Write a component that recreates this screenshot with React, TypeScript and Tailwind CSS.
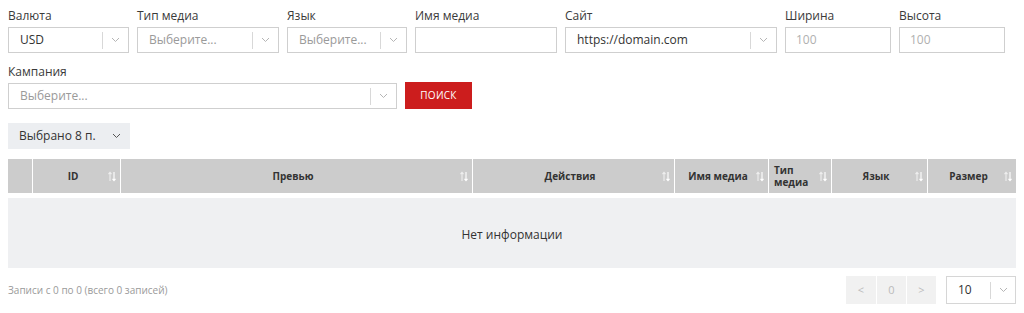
import React from 'react';

const FONT = { fontFamily: '"Open Sans", "Noto Sans", sans-serif' };

function Chevron({ className = 'text-[#b5b5b5]' }: { className?: string }) {
  return (
    <svg width="9" height="6" viewBox="0 0 9 6" className={className}>
      <path d="M1 1l3.5 3.5L8 1" fill="none" stroke="currentColor" strokeWidth="1" />
    </svg>
  );
}

function SortIcon() {
  return (
    <svg width="8" height="11" viewBox="0 0 8 11" className="shrink-0">
      <path d="M2 10V1.5M0.5 3.2L2 1.3 3.5 3.2" fill="none" stroke="#eeeeee" strokeWidth="1.1" />
      <path d="M6 1v8.5M4.5 7.8L6 9.7 7.5 7.8" fill="none" stroke="#ffffff" strokeWidth="1.1" />
    </svg>
  );
}

function Select({ value, placeholder, width }: { value?: string; placeholder?: string; width: string }) {
  return (
    <div className={`${width} h-[26px] flex items-center border border-[#cfcfcf] bg-white`}>
      <span className={`flex-1 pl-[11px] text-[12px] truncate ${value ? 'text-[#333]' : 'text-[#9a9a9a]'}`}>
        {value ?? placeholder}
      </span>
      <span className="h-[17px] w-px bg-[#d8d8d8]" />
      <span className="w-[25px] flex justify-center">
        <Chevron />
      </span>
    </div>
  );
}

function Field({ label, children }: { label: string; children: React.ReactNode }) {
  return (
    <div className="flex flex-col">
      <label className="text-[12px] leading-[16px] text-[#3a3a3a] mb-[3px]">{label}</label>
      {children}
    </div>
  );
}

function Input({ width, placeholder }: { width: string; placeholder?: string }) {
  return (
    <div className={`${width} h-[26px] flex items-center border border-[#cfcfcf] bg-white pl-[10px] text-[12px] text-[#b0b0b0]`}>
      {placeholder}
    </div>
  );
}

const COLUMNS: { label: string; width: string; align?: 'left' }[] = [
  { label: 'ID', width: 'w-[87px]' },
  { label: 'Превью', width: 'w-[351px]' },
  { label: 'Действия', width: 'w-[201px]' },
  { label: 'Имя медиа', width: 'w-[93px]' },
  { label: 'Тип медиа', width: 'w-[62px]', align: 'left' },
  { label: 'Язык', width: 'w-[95px]' },
  { label: 'Размер', width: 'flex-1' },
];

export default function App() {
  return (
    <div className="w-[1024px] h-[313px] bg-white px-2 pt-2 overflow-hidden" style={FONT}>
      <div className="flex gap-[8px]">
        <Field label="Валюта">
          <Select value="USD" width="w-[121px]" />
        </Field>
        <Field label="Тип медиа">
          <Select placeholder="Выберите..." width="w-[142px]" />
        </Field>
        <Field label="Язык">
          <Select placeholder="Выберите..." width="w-[120px]" />
        </Field>
        <Field label="Имя медиа">
          <Input width="w-[142px]" />
        </Field>
        <Field label="Сайт">
          <Select value="https://domain.com" width="w-[212px]" />
        </Field>
        <Field label="Ширина">
          <Input width="w-[106px]" placeholder="100" />
        </Field>
        <Field label="Высота">
          <Input width="w-[106px]" placeholder="100" />
        </Field>
      </div>

      <div className="flex items-end gap-[8px] mt-[11px]">
        <Field label="Кампания">
          <Select placeholder="Выберите..." width="w-[389px]" />
        </Field>
        <button className="w-[67px] h-[27px] bg-[#cc1d1d] text-white text-[10px] font-medium uppercase tracking-wide">
          Поиск
        </button>
      </div>

      <div className="mt-[14px] w-[122px] h-[26px] bg-[#eceef1] flex items-center pl-[11px] pr-[9px] justify-between text-[12px] text-[#333]">
        <span>Выбрано 8 п.</span>
        <Chevron className="text-[#555]" />
      </div>

      <div className="mt-[10px] w-[1008px]">
        <div className="flex h-[34px] gap-px bg-white">
          <div className="w-[24px] bg-[#cccccc]" />
          {COLUMNS.map((c) => (
            <div key={c.label} className={`${c.width} bg-[#cccccc] flex items-center pl-[5px] pr-[4px]`}>
              <span
                className={`flex-1 text-[10px] font-bold text-[#333] leading-[12px] ${c.align === 'left' ? 'text-left' : 'text-center'}`}
              >
                {c.align === 'left' ? (
                  <>
                    Тип
                    <br />
                    медиа
                  </>
                ) : (
                  c.label
                )}
              </span>
              <SortIcon />
            </div>
          ))}
        </div>
        <div className="mt-[5px] h-[70px] bg-[#eff0f2] flex items-center justify-center pt-[3px] text-[12px] text-[#333]">
          Нет информации
        </div>
      </div>

      <div className="mt-[8px] w-[1008px] flex items-center justify-between">
        <span className="text-[10px] text-[#9a9a9a]">Записи с 0 по 0 (всего 0 записей)</span>
        <div className="flex items-center">
          <div className="flex gap-px">
            <div className="w-[30px] h-[28px] bg-[#f1f1f1] flex items-center justify-center text-[11px] text-[#bbb]">&lt;</div>
            <div className="w-[29px] h-[28px] bg-[#f1f1f1] flex items-center justify-center text-[11px] text-[#bbb]">0</div>
            <div className="w-[29px] h-[28px] bg-[#f1f1f1] flex items-center justify-center text-[11px] text-[#bbb]">&gt;</div>
          </div>
          <div className="ml-[10px] w-[70px] h-[28px] border border-[#d6d6d6] flex items-center">
            <span className="flex-1 pl-[11px] text-[12px] text-[#333]">10</span>
            <span className="h-[17px] w-px bg-[#d8d8d8]" />
            <span className="w-[24px] flex justify-center">
              <Chevron />
            </span>
          </div>
        </div>
      </div>
    </div>
  );
}
